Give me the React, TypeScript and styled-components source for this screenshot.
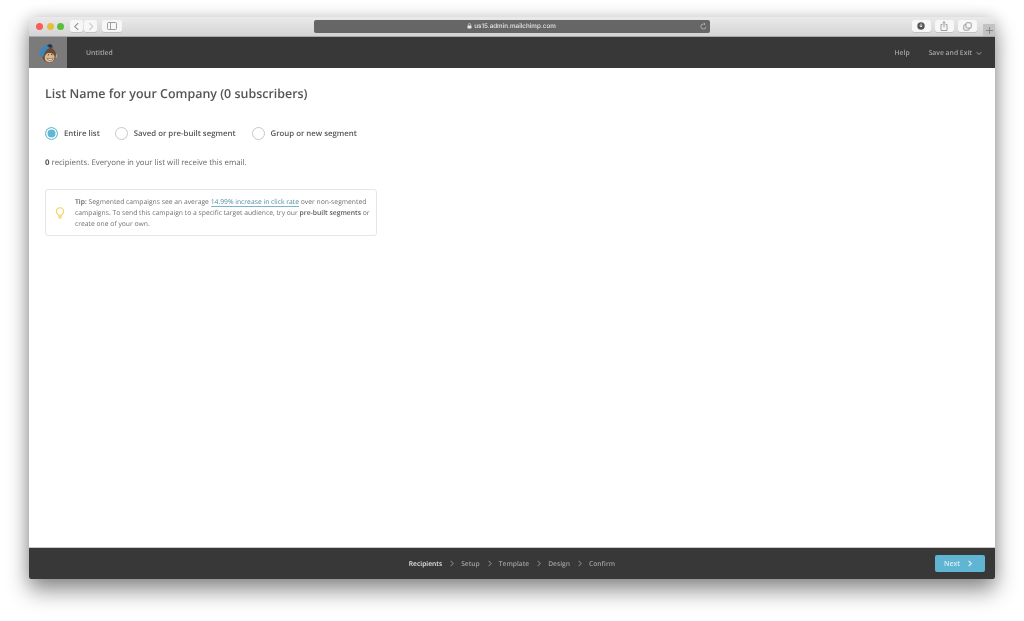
import React from "react";
import styled, { createGlobalStyle } from "styled-components";

const Global = createGlobalStyle`
  html, body { margin: 0; padding: 0; height: 100%; background: #fff; overflow: hidden; }
  #root { height: 100%; }
  * { box-sizing: border-box; }
`;

const Desktop = styled.div`
  width: 1024px;
  height: 621px;
  padding: 17px 29px 42px;
  background: #fff;
  font-family: "Open Sans", "Liberation Sans", sans-serif;
  text-rendering: geometricPrecision;
  filter: blur(0.3px);
`;

const Window = styled.div`
  width: 966px;
  height: 562px;
  display: flex;
  flex-direction: column;
  border-radius: 3px 3px 2px 2px;
  background: #fff;
  box-shadow: 0 12px 22px rgba(0, 0, 0, 0.42), 0 0 16px rgba(0, 0, 0, 0.16);
`;

const Chrome = styled.div`
  position: relative;
  height: 20px;
  flex: none;
  display: flex;
  align-items: center;
  padding: 0 0 1px 7px;
  border-radius: 3px 3px 0 0;
  background: linear-gradient(#ebeaeb, #d5d4d5);
  border-bottom: 1px solid #aaa9aa;
`;

const Light = styled.span<{ $c: string }>`
  width: 7px;
  height: 7px;
  border-radius: 50%;
  margin-right: 3.5px;
  background: ${(p) => p.$c};
`;

const ChromeGroup = styled.div<{ $ml?: number }>`
  display: flex;
  gap: 1px;
  margin-left: ${(p) => p.$ml ?? 0}px;
`;

const ChromeBtn = styled.div<{ $w: number; $dim?: boolean }>`
  width: ${(p) => p.$w}px;
  height: 12px;
  display: flex;
  align-items: center;
  justify-content: center;
  background: #f7f7f7;
  border-radius: 2px;
  box-shadow: 0 0.5px 0.5px rgba(0, 0, 0, 0.2);
  color: ${(p) => (p.$dim ? "#c4c4c4" : "#888")};
`;

const UrlBar = styled.div`
  position: relative;
  width: 396px;
  height: 13px;
  margin-left: 192px;
  display: flex;
  align-items: center;
  justify-content: center;
  gap: 2px;
  background: #666666;
  border-radius: 2px;
  color: #e6e6e6;
  font-family: "Inter", "Liberation Sans", sans-serif;
  font-size: 6.3px;
  font-weight: 500;
`;

const Reload = styled.span`
  position: absolute;
  right: 3px;
  top: 3px;
  display: flex;
  color: #c8c8c8;
`;

const ChromeRight = styled.div`
  margin-left: 202px;
  display: flex;
  gap: 4px;
`;

const NewTab = styled.div`
  position: absolute;
  right: 0;
  bottom: 0;
  width: 12px;
  height: 12px;
  background: #c3c2c3;
  color: #7a7a7a;
  display: flex;
  align-items: center;
  justify-content: center;
`;

const TopNav = styled.header`
  height: 31px;
  flex: none;
  display: flex;
  align-items: center;
  background: #383838;
  color: #a6a6a6;
  font-size: 6.8px;
  font-weight: 600;
`;

const LogoCell = styled.div`
  width: 38px;
  height: 100%;
  display: flex;
  align-items: center;
  justify-content: center;
  background: #7b7b7b;
`;

const DocTitle = styled.span`
  margin-left: 19px;
  flex: 1;
`;

const NavLink = styled.span<{ $mr: number }>`
  display: flex;
  align-items: center;
  gap: 4px;
  margin-right: ${(p) => p.$mr}px;
`;

const Main = styled.main`
  flex: 1;
  padding: 17px 16px 0;
  color: #444;
`;

const Title = styled.h1`
  margin: 0;
  font-size: 12.45px;
  line-height: 18px;
  font-weight: 600;
  color: #555;
`;

const RadioRow = styled.div`
  display: flex;
  align-items: center;
  margin-top: 24px;
`;

const RadioLabel = styled.label<{ $mr: number }>`
  display: flex;
  align-items: center;
  gap: 6px;
  margin-right: ${(p) => p.$mr}px;
  font-size: 7.82px;
  line-height: 12px;
  font-weight: 600;
  color: #555;
`;

const RadioDot = styled.span<{ $on?: boolean }>`
  width: 13px;
  height: 13px;
  border-radius: 50%;
  background: ${(p) => (p.$on ? "#62b8d4" : "#fff")};
  border: 1px solid ${(p) => (p.$on ? "#6fbfd8" : "#c8c8c8")};
  box-shadow: ${(p) => (p.$on ? "inset 0 0 0 1.5px #fff" : "none")};
`;

const Recipients = styled.p`
  margin: 18px 0 0;
  font-size: 7.83px;
  line-height: 11px;
  color: #666;
  b { font-weight: 700; color: #555; }
`;

const TipBox = styled.aside`
  width: 332px;
  height: 47px;
  margin-top: 20px;
  display: flex;
  align-items: center;
  padding: 0 5px 0 9px;
  border: 1px solid #e6e6e6;
  border-radius: 3px;
`;

const TipIcon = styled.span`
  flex: none;
  display: flex;
  margin-right: 10px;
  margin-top: 1px;
`;

const TipText = styled.p`
  margin: 0;
  font-size: 6.77px;
  line-height: 11.2px;
  color: #707070;
  white-space: nowrap;
  b { font-weight: 600; color: #5c5c5c; }
  a {
    color: #4b8ea6;
    text-decoration: none;
    border-bottom: 1px solid #7db5c8;
  }
`;

const Footer = styled.footer`
  position: relative;
  height: 32px;
  flex: none;
  display: flex;
  align-items: center;
  justify-content: center;
  border-radius: 0 0 2px 2px;
  background: #383838;
  border-top: 1px solid #c9c9c9;
`;

const Steps = styled.nav`
  display: flex;
  align-items: center;
  gap: 6px;
  font-size: 6.7px;
  font-weight: 600;
  color: #a0a0a0;
`;

const Step = styled.span<{ $active?: boolean }>`
  color: ${(p) => (p.$active ? "#e6e6e6" : "#a0a0a0")};
`;

const Sep = styled.span`
  display: flex;
  color: #7d7d7d;
`;

const NextBtn = styled.button`
  position: absolute;
  right: 10px;
  top: 7px;
  width: 50px;
  height: 17px;
  padding: 0 0 0 9px;
  display: flex;
  align-items: center;
  gap: 6px;
  border: 0;
  border-radius: 2px;
  background: #5fb5d2;
  color: #d8edf5;
  font-family: inherit;
  font-size: 7px;
  font-weight: 600;
`;

const Chevron = ({ dir = "right", size = 7, w = 1.2 }: { dir?: "left" | "right" | "down"; size?: number; w?: number }) => {
  const d = dir === "right" ? "M3 1l3 3-3 3" : dir === "left" ? "M5.5 1L2.5 4l3 3" : "M1 3l3 3 3-3";
  return (
    <svg width={size} height={size} viewBox="0 0 8 8" fill="none" stroke="currentColor" strokeWidth={w}>
      <path d={d} />
    </svg>
  );
};

const Monkey = () => (
  <svg width="20" height="22" viewBox="0 0 20 22">
    <circle cx="17" cy="14" r="2.300" fill="#c9a27c" />
    <ellipse cx="11" cy="13" rx="7" ry="7.500" fill="#6b4a35" />
    <path d="M1.500 12.500C1 8 5 3 12 2.500L14 5.500C9.500 6 6.500 9.500 5.500 14.500 3.500 15 2 14.500 1.500 12.500z" fill="#3d86b8" />
    <path d="M9 3.200C10.500 2.400 12.800 2 13.600 2.500L14.800 5.400 11.500 5.700z" fill="#2f3136" />
    <path d="M6.800 16.500C6.500 12.500 9 10.500 12 11c3.300.3 4.900 2.300 4.500 5-.4 2.800-3 4.500-5.500 4.300-2.400-.3-4-1.800-4.200-3.800z" fill="#dcb990" />
    <path d="M9.300 16.200c1.800.8 4.200.8 5.800-.2-.3 1.700-1.600 2.600-3 2.500-1.400 0-2.500-.8-2.800-2.300z" fill="#f3efe8" stroke="#5b3d2b" strokeWidth=".5" />
    <path d="M9.800 13l1.300-.5M13.200 12.500l1.300.4" stroke="#2a1c14" strokeWidth=".8" fill="none" />
  </svg>
);

const Bulb = () => (
  <svg width="10" height="12" viewBox="0 0 11 13" fill="none" stroke="#f8cf5a" strokeWidth="1.2">
    <path d="M3.700 9C3.500 7.800 1.500 7 1.500 4.700a4 4 0 0 1 8 0C9.500 7 7.500 7.800 7.300 9z" />
    <path d="M3.800 10.600h3.400M4.400 12h2.200" strokeLinecap="round" />
  </svg>
);

export default function App() {
  return (
    <Desktop>
      <Global />
      <Window>
        <Chrome>
          <Light $c="#fc5b57" />
          <Light $c="#e5bf3c" />
          <Light $c="#57c038" />
          <ChromeGroup $ml={2}>
            <ChromeBtn $w={13}><Chevron dir="left" size={9} w={0.9} /></ChromeBtn>
            <ChromeBtn $w={13} $dim><Chevron dir="right" size={9} w={0.9} /></ChromeBtn>
          </ChromeGroup>
          <ChromeGroup $ml={5}>
            <ChromeBtn $w={20}>
              <svg width="10" height="8" viewBox="0 0 10 8" fill="none" stroke="currentColor" strokeWidth=".8">
                <rect x=".5" y=".5" width="9" height="7" rx="1" />
                <path d="M3.500 .5v7" />
              </svg>
            </ChromeBtn>
          </ChromeGroup>
          <UrlBar>
            <svg width="5" height="6" viewBox="0 0 5 6" fill="#e8e8e8">
              <rect x=".5" y="2.500" width="4" height="3" rx=".4" />
              <path d="M1.300 2.500V1.700a1.200 1.200 0 0 1 2.400 0v.8" fill="none" stroke="#e8e8e8" strokeWidth=".6" />
            </svg>
            us15.admin.mailchimp.com
            <Reload>
              <svg width="7" height="7" viewBox="0 0 8 8" fill="none" stroke="currentColor" strokeWidth=".8">
                <path d="M6.800 4.200A2.900 2.900 0 1 1 4 1.100h1.600M4.700 0l1.100 1.100L4.700 2.200" />
              </svg>
            </Reload>
          </UrlBar>
          <ChromeRight>
            <ChromeBtn $w={19}>
              <svg width="8" height="8" viewBox="0 0 8 8">
                <circle cx="4" cy="4" r="3.700" fill="#555" />
                <path d="M4 1.600v3M2.700 3.500L4 5l1.300-1.500" stroke="#fff" strokeWidth=".8" fill="none" />
              </svg>
            </ChromeBtn>
            <ChromeBtn $w={19}>
              <svg width="8" height="10" viewBox="0 0 8 10" fill="none" stroke="currentColor" strokeWidth=".8">
                <path d="M2.500 3.500H1v6h6v-6H5.500M4 6.500V.7M2.600 2L4 .7 5.400 2" />
              </svg>
            </ChromeBtn>
            <ChromeBtn $w={19}>
              <svg width="9" height="9" viewBox="0 0 9 9" fill="none" stroke="currentColor" strokeWidth=".8">
                <rect x="3" y=".8" width="5.200" height="5.200" rx=".6" />
                <path d="M3 2.800H1.500a.7.700 0 0 0-.7.700v4a.7.700 0 0 0 .7.700h4a.7.700 0 0 0 .7-.7V6" />
              </svg>
            </ChromeBtn>
          </ChromeRight>
          <NewTab>
            <svg width="7" height="7" viewBox="0 0 7 7" stroke="currentColor" strokeWidth=".8">
              <path d="M3.500 0v7M0 3.500h7" />
            </svg>
          </NewTab>
        </Chrome>
        <TopNav>
          <LogoCell><Monkey /></LogoCell>
          <DocTitle>Untitled</DocTitle>
          <NavLink $mr={19}>Help</NavLink>
          <NavLink $mr={13}>Save and Exit <Chevron dir="down" size={6} w={1.300} /></NavLink>
        </TopNav>
        <Main>
          <Title>List Name for your Company (0 subscribers)</Title>
          <RadioRow>
            <RadioLabel $mr={15}><RadioDot $on />Entire list</RadioLabel>
            <RadioLabel $mr={16}><RadioDot />Saved or pre-built segment</RadioLabel>
            <RadioLabel $mr={0}><RadioDot />Group or new segment</RadioLabel>
          </RadioRow>
          <Recipients><b>0</b> recipients. Everyone in your list will receive this email.</Recipients>
          <TipBox>
            <TipIcon><Bulb /></TipIcon>
            <TipText>
              <b>Tip:</b> Segmented campaigns see an average <a>14.99% increase in click rate</a> over non-segmented<br />
              campaigns. To send this campaign to a specific target audience, try our <b>pre-built segments</b> or<br />
              create one of your own.
            </TipText>
          </TipBox>
        </Main>
        <Footer>
          <Steps>
            <Step $active>Recipients</Step>
            <Sep><Chevron /></Sep>
            <Step>Setup</Step>
            <Sep><Chevron /></Sep>
            <Step>Template</Step>
            <Sep><Chevron /></Sep>
            <Step>Design</Step>
            <Sep><Chevron /></Sep>
            <Step>Confirm</Step>
          </Steps>
          <NextBtn>Next <Chevron size={7} w={1.500} /></NextBtn>
        </Footer>
      </Window>
    </Desktop>
  );
}
